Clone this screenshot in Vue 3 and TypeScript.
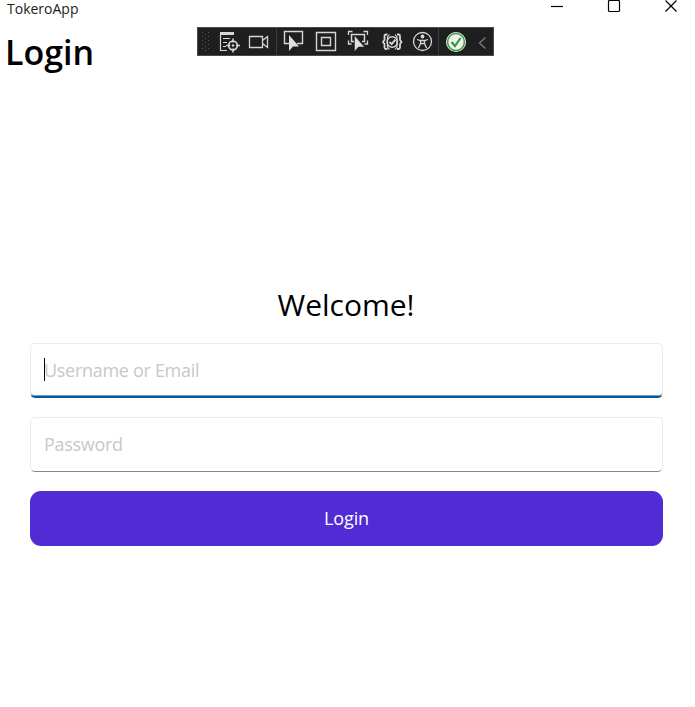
<script setup lang="ts">
import { ref } from 'vue'

const username = ref('')
const password = ref('')
</script>

<template>
  <div class="window">
    <header class="titlebar">
      <span class="app-name">TokeroApp</span>
      <div class="controls">
        <svg width="14" height="14" viewBox="0 0 14 14"><path d="M1 6.500h12" /></svg>
        <svg width="14" height="14" viewBox="0 0 14 14"><rect x="1.500" y=".5" width="11" height="11" rx="1" /></svg>
        <svg width="14" height="14" viewBox="0 0 14 14"><path d="M1.500 .5l11 11M12.500 .5l-11 11" /></svg>
      </div>
    </header>
    <h1 class="page-title"><span>Login</span></h1>

    <div class="toolbar">
      <svg class="grip" viewBox="0 0 18 27" width="18" height="27">
        <path d="M4.500 4v20M10.500 4v20" stroke="#555" stroke-dasharray="1 3" />
        <path d="M7.500 6v18" stroke="#555" stroke-dasharray="1 3" />
      </svg>
      <svg viewBox="0 0 28 27" width="28" height="27">
        <path d="M4 4h14v3H4z" fill="#d6d6d6" stroke="none" />
        <path d="M4.500 7v15.500H11M7 10.500h7M7 14.500h4M7 18.500h3" stroke-width="1.200" />
        <circle cx="17" cy="17.500" r="4.300" stroke-width="1.700" />
        <path d="M17 10.500v4M17 20.500v4M10.200 17.500h4M20 17.500h4" stroke-width="1.500" />
        <circle cx="17" cy="17.500" r="1.200" fill="#d6d6d6" stroke="none" />
      </svg>
      <svg viewBox="0 0 32 27" width="32" height="27">
        <path d="M5.500 8.500h13v11h-13zM18.500 12.500l5-4v11l-5-4" stroke-width="1.300" />
      </svg>
      <i class="sep"></i>
      <svg viewBox="0 0 33 27" width="33" height="27">
        <path d="M12 15.500H7.500v-12h18v12H20" stroke-width="1.400" />
        <path d="M12 7v16l4-4.500h6z" fill="#e0e0e0" stroke="none" />
      </svg>
      <svg viewBox="0 0 32 27" width="32" height="27">
        <path d="M6.500 4.500h19v18h-19zM11.500 9.500h9v8h-9z" stroke-width="1.400" />
      </svg>
      <svg viewBox="0 0 34 27" width="34" height="27">
        <path d="M6.500 7V3.500H10.500M21.500 3.500h4V7M6.500 12.500v3.500H9.500M25.500 12.500v3.500H22.500" stroke-width="1.300" />
        <path d="M12 13.500H9.500V6.500h13V13.500H20" stroke-width="1.500" />
        <path d="M12.500 7.500v16l4-4.500h6z" fill="#e0e0e0" stroke="#202020" stroke-width=".5" />
      </svg>
      <svg viewBox="0 0 32 27" width="32" height="27">
        <path d="M11.500 6.500H10Q8.500 6.500 8.500 8v4L7 14l1.500 2v3.500Q8.500 21 10 21h1.500M21 6.500h1.500Q24 6.500 24 8v4l1.500 2L24 16v3.500Q24 21 22.500 21H21" stroke-width="1.800" />
        <path d="M13.500 6.500L11.500 9v10l2 2.500M19 6.500L21 9v10l-2 2.500" stroke-width="1.200" />
        <circle cx="16.250" cy="14" r="5.200" stroke-width="1.500" />
        <path d="M13.500 14l2.200 2.200 3.700-4.500" stroke-width="1.900" />
      </svg>
      <svg viewBox="0 0 28 27" width="28" height="27">
        <circle cx="14.500" cy="13.500" r="9" stroke-width="1.300" />
        <circle cx="14.500" cy="8.500" r="1.900" fill="#d6d6d6" stroke="none" />
        <path d="M9 11.500l3.500 1h4l3.500-1M12.500 12.500v3l-2 4.500M16.500 12.500v3l2 4.500M12.500 15.500h4" stroke-width="1.300" />
      </svg>
      <i class="sep sep-status"></i>
      <svg viewBox="0 0 34 27" width="34" height="27">
        <circle cx="17" cy="14" r="10" fill="#f2f2f2" stroke="none" />
        <circle cx="17" cy="14" r="8.400" stroke="#35a13b" stroke-width="1.500" />
        <path d="M12.500 14l3.500 4 5.500-8" stroke="#25992e" stroke-width="2" />
      </svg>
      <svg viewBox="0 0 18 27" width="18" height="27">
        <path d="M12.500 9.500l-6 5.500 6 5.500" stroke="#777" stroke-width="1.400" />
      </svg>
    </div>

    <main class="login">
      <h2 class="welcome"><span>Welcome!</span></h2>
      <form class="fields" @submit.prevent>
        <label class="field focused">
          <i class="caret"></i>
          <input v-model="username" type="text" placeholder="Username or Email" />
        </label>
        <label class="field">
          <input v-model="password" type="password" placeholder="Password" />
        </label>
        <button class="submit" type="submit">Login</button>
      </form>
    </main>
  </div>
</template>

<style>
body { background: #fff; overflow: hidden; }
</style>

<style scoped>
* { box-sizing: border-box; }
.window {
  position: relative;
  height: 707px;
  background: #fff;
  color: #000;
  font-family: "Open Sans", "Noto Sans", sans-serif;
}
.titlebar { display: flex; justify-content: space-between; align-items: flex-start; height: 30px; }
.app-name {
  display: block;
  padding-left: 7px;
  font-size: 14px;
  line-height: 17px;
  color: #222;
}
.controls { display: flex; gap: 43px; padding-right: 17px; }
.controls svg { fill: none; stroke: #000; stroke-width: 1.2; }
.page-title {
  margin: 0;
  padding-left: 5px;
  font-size: 34px;
  line-height: 45px;
  font-weight: 600;
}
.toolbar {
  position: absolute;
  left: 197px;
  top: 27px;
  display: flex;
  width: 297px;
  height: 29px;
  border: 1px solid #4a4a4a;
  background: #1f1f1f;
}
.toolbar svg { flex: none; fill: none; stroke: #d6d6d6; }
.sep { flex: none; width: 1px; height: 27px; background: #3d3d3d; }
.sep-status { margin: 0 0 0 2px; }
.login { padding: 209px 32px 0 30px; }
.welcome {
  margin: 0;
  height: 59px;
  padding-right: 1px;
  text-align: center;
  font-size: 30px;
  line-height: 41px;
  font-weight: 400;
}
.fields { display: grid; gap: 19px; }
.field {
  display: flex;
  align-items: center;
  position: relative;
  height: 55px;
  padding-left: 13px;
  border: 1px solid #ececec;
  border-bottom: 1px solid #868686;
  border-radius: 5px;
}
.focused { border-bottom: 2px solid #005a9e; box-shadow: inset 0 -1px #6ea2ca; }
.caret { position: absolute; left: 13px; top: 14px; width: 1px; height: 23px; background: #000; }
input {
  width: 100%;
  padding: 0;
  border: 0;
  outline: 0;
  background: transparent;
  font: 18px/25px "Open Sans", "Noto Sans", sans-serif;
  letter-spacing: -.3px;
}
input::placeholder { color: #c8c8c8; opacity: 1; }
.submit {
  height: 55px;
  padding: 0;
  border: 0;
  border-radius: 11px;
  background: #512bd4;
  color: #fff;
  font: 18px/25px "Open Sans", "Noto Sans", sans-serif;
  letter-spacing: -.15px;
}
</style>
